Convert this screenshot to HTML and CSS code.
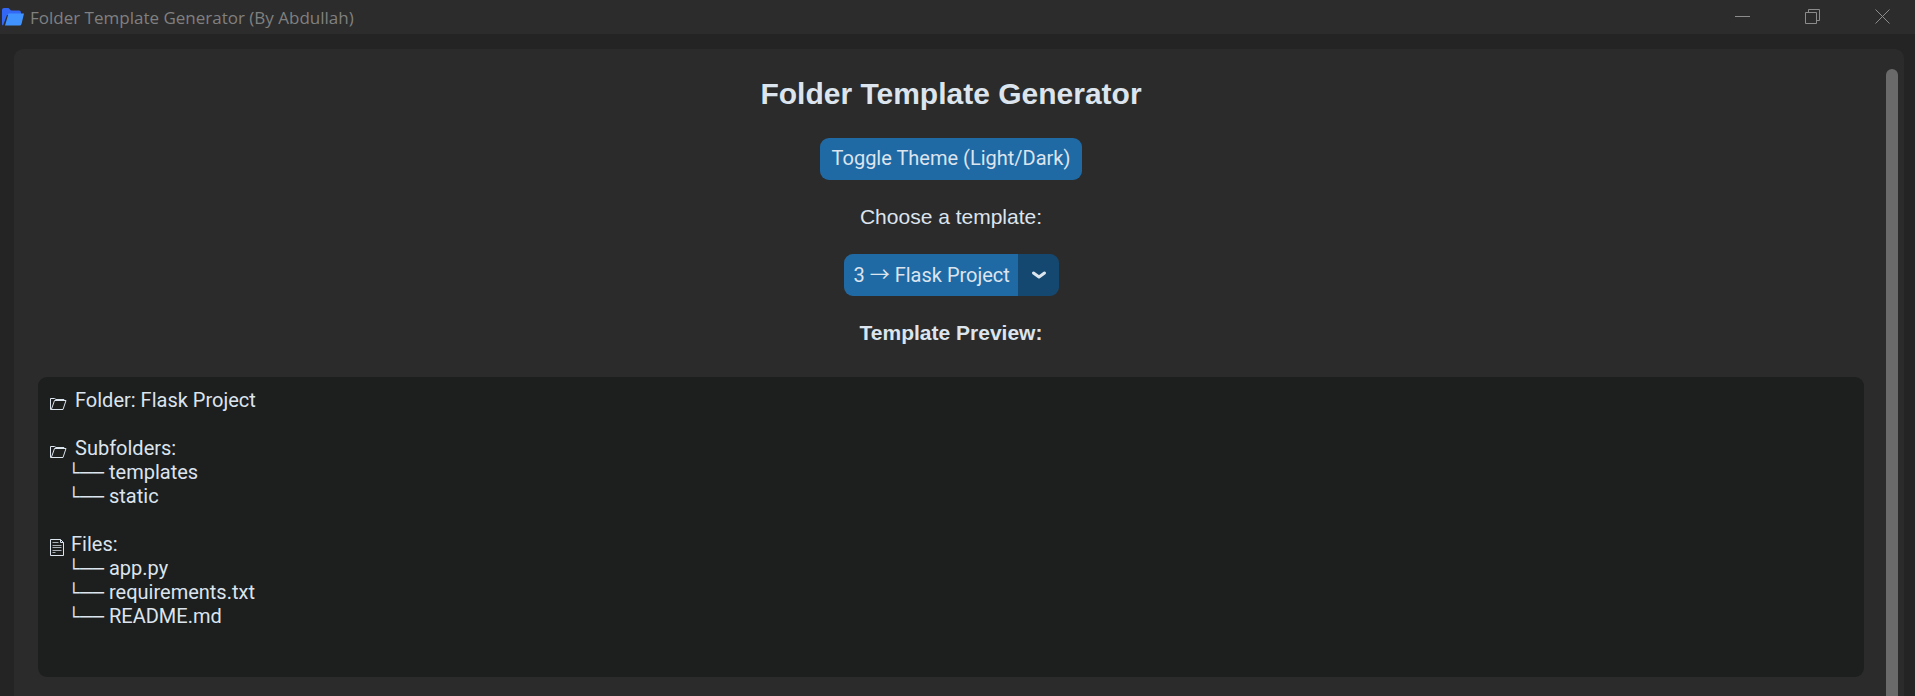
FILE: index.html
```html
<!DOCTYPE html>
<html lang="en">
<head>
<meta charset="utf-8">
<title>Folder Template Generator (By Abdullah)</title>
<link rel="stylesheet" href="styles.css">
</head>
<body>
<header class="titlebar">
  <svg class="app-icon" width="24" height="20" viewBox="0 0 24 20" aria-hidden="true">
    <path d="M2 3q0-2 2-2h4.500l2.500 2.500h8q2 0 2 2V8H7L3 18.500q-1-.5-1-1.500z" fill="#3367f6"/>
    <path d="M8.500 6.500H24L21.500 17q-.4 1.500-2 1.500H5z" fill="#4093ff"/>
  </svg>
  <span class="window-title">Folder Template Generator (By Abdullah)</span>
  <div class="window-controls">
    <button class="window-button" type="button" aria-label="Minimize">
      <svg width="16" height="16" viewBox="0 0 16 16"><path d="M0 7.500h15"/></svg>
    </button>
    <button class="window-button" type="button" aria-label="Restore">
      <svg width="16" height="16" viewBox="0 0 16 16"><path d="M.5 3.500h11v11H.5zM3.500 3.500v-3h11v11h-3"/></svg>
    </button>
    <button class="window-button" type="button" aria-label="Close">
      <svg width="16" height="16" viewBox="0 0 16 16"><path d="M.5.5l14 14M14.500.5l-14 14"/></svg>
    </button>
  </div>
</header>
<main class="panel">
  <div class="content">
    <h1 class="heading">Folder Template Generator</h1>
    <button class="theme-button" type="button">Toggle Theme (Light/Dark)</button>
    <label class="label" for="template">Choose a template:</label>
    <div class="picker">
      <select class="picker-select" id="template">
        <option>3 → Flask Project</option>
      </select>
      <svg class="picker-arrow" width="16" height="10" viewBox="0 0 16 10" aria-hidden="true"><path d="M2.500 3L8 7L13.500 3"/></svg>
    </div>
    <h2 class="label label-strong">Template Preview:</h2>
    <section class="preview">
      <p class="line"><svg class="glyph" width="18" height="20" viewBox="0 0 18 20" aria-hidden="true"><path d="M.5 19.500V8.500h4l1.500 1h8V11M.5 19.500H13L16 10.500H4.500L1.500 19"/></svg>Folder: Flask Project</p>
      <p class="line"><svg class="glyph" width="18" height="20" viewBox="0 0 18 20" aria-hidden="true"><path d="M.5 19.500V8.500h4l1.500 1h8V11M.5 19.500H13L16 10.500H4.500L1.500 19"/></svg>Subfolders:</p>
      <ul class="tree">
        <li><span class="branch">└──</span> templates</li>
        <li><span class="branch">└──</span> static</li>
      </ul>
      <p class="line"><svg class="glyph glyph-file" width="16" height="24" viewBox="0 0 16 24" aria-hidden="true"><path d="M.5 7.500h10l3 3v13H.5zM10.500 7.500v3h3"/><path class="glyph-text" d="M2.500 10.500h6M2.500 13.500h9M2.500 15.500h9M2.500 18.500h9M2.500 20.500h3"/></svg>Files:</p>
      <ul class="tree">
        <li><span class="branch">└──</span> app.py</li>
        <li><span class="branch">└──</span> requirements.txt</li>
        <li><span class="branch">└──</span> README.md</li>
      </ul>
    </section>
  </div>
  <div class="scrollbar"></div>
</main>
</body>
</html>
```
FILE: styles.css
```css
* {
  box-sizing: border-box;
}

body {
  margin: 0;
  height: 100vh;
  overflow: hidden;
  display: flex;
  flex-direction: column;
  background: #242424;
  color: #dce4ee;
  font: 20px/24px Roboto, "DejaVu Sans", sans-serif;
}

.titlebar {
  display: flex;
  align-items: center;
  height: 34px;
  flex: none;
  background: #2c2c2c;
  color: #808080;
  font: 17px/34px "Open Sans", "Noto Sans", sans-serif;
}

.app-icon {
  margin-right: 6px;
}

.window-title {
  padding-top: 2px;
}

.window-controls {
  display: flex;
  gap: 30px;
  margin-left: auto;
  padding-right: 12px;
}

.window-button {
  display: flex;
  align-items: center;
  justify-content: center;
  width: 40px;
  height: 34px;
  padding: 0;
  border: 0;
  background: none;
}

.window-button svg {
  fill: none;
  stroke: #8c8c8c;
}

.panel {
  display: flex;
  flex: 1;
  margin: 15px 11px 0 14px;
  padding: 20px 6px 0 24px;
  border-radius: 9px 9px 0 0;
  background: #2b2b2b;
}

.content {
  display: flex;
  flex: 1;
  flex-direction: column;
  align-items: center;
}

.scrollbar {
  width: 12px;
  margin-left: 22px;
  border-radius: 6px 6px 0 0;
  background: #6a6a6a;
}

.heading {
  margin: 6px 0 26px;
  font: bold 30px/37px "Liberation Sans", Arial, sans-serif;
}

.theme-button {
  height: 42px;
  padding: 0 12px 2px;
  border: 0;
  border-radius: 9px;
  background: #1f6aa5;
  color: inherit;
  font: inherit;
}

.label {
  margin: 25px 0;
  font: 21px/24px "Liberation Sans", Arial, sans-serif;
}

.label-strong {
  margin-bottom: 32px;
  font-weight: bold;
}

.picker {
  display: grid;
  align-items: center;
  border-radius: 9px;
  overflow: hidden;
  background: linear-gradient(to left, #144870 41px, #1f6aa5 41px);
}

.picker-select {
  grid-area: 1 / 1;
  height: 42px;
  padding: 0 48px 0 10px;
  border: 0;
  appearance: none;
  background: none;
  color: inherit;
  font: 20px/24px Roboto, "Noto Sans CJK JP", sans-serif;
}

.picker-arrow {
  grid-area: 1 / 1;
  justify-self: end;
  margin-right: 12px;
  fill: none;
  stroke: #dce4ee;
  stroke-width: 3;
  stroke-linecap: round;
  stroke-linejoin: round;
  pointer-events: none;
}

.preview {
  align-self: stretch;
  height: 300px;
  padding: 11px 12px;
  border-radius: 9px;
  background: #1d1e1e;
}

.line {
  display: flex;
  align-items: center;
  gap: 7px;
  margin: 0 0 24px;
}

.line:has(+ .tree) {
  margin-bottom: 0;
}

.glyph {
  fill: none;
  stroke: #dce4ee;
}

.glyph-text {
  stroke: #a9afb6;
}

.glyph-file {
  margin-right: -2px;
}

.tree {
  margin: 0 0 24px;
  padding-left: 18px;
  list-style: none;
}

.branch {
  font: 20px/16px "Liberation Mono", monospace;
}
```
